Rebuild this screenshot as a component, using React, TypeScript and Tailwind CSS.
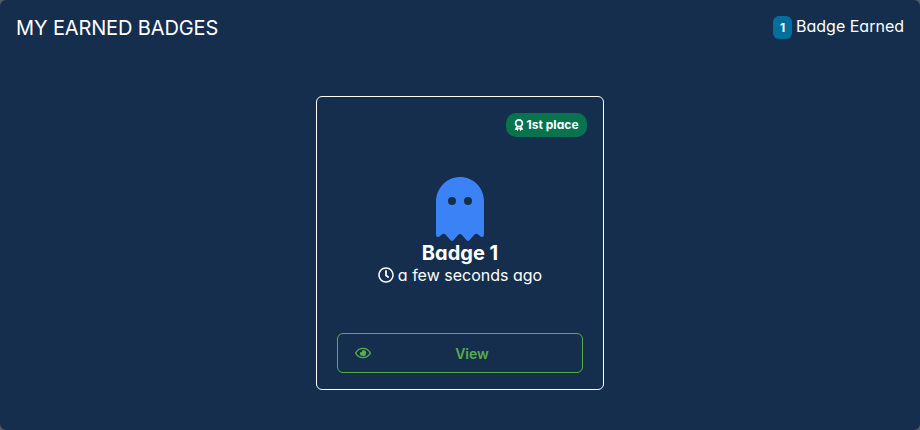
import React from "react";
import { FaRegClock, FaRegEye } from "react-icons/fa";

function RibbonIcon() {
  return (
    <svg className="h-3 w-[10px]" viewBox="0 0 10 12" fill="none" stroke="currentColor">
      <circle cx="5" cy="4.3" r="3.4" strokeWidth="1.8" />
      <path d="M2.6 7.8 1.3 10.5l1.4-.1.8 1.1L4.6 9M7.4 7.8l1.3 2.7-1.4-.1-.8 1.1L5.4 9" fill="currentColor" strokeWidth="0.8" />
    </svg>
  );
}

export default function App() {
  return (
    <div className="flex h-[430px] w-[920px] flex-col bg-[#555c67] font-['Inter',sans-serif] text-white [font-feature-settings:'cv11']">
      <section className="flex flex-1 flex-col rounded-md bg-[#162e4d]">
        <header className="flex h-14 items-center justify-between px-4">
          <h1 className="text-xl font-normal leading-7 tracking-[-0.13px]">MY EARNED BADGES</h1>
          <div className="flex items-center gap-1 pb-0.5">
            <span className="flex h-[23px] w-[19px] items-center justify-center rounded-md bg-[#046f9c] pt-px text-xs font-bold">1</span>
            <span className="-mt-0.5 text-base font-normal">Badge Earned</span>
          </div>
        </header>
        <main className="flex justify-center pt-10">
          <article className="flex h-[294px] w-[288px] flex-col rounded-md border border-white px-5 py-4">
            <div className="-mr-1 flex justify-end">
              <span className="flex h-6 w-[81px] items-center justify-center gap-[2px] rounded-[10px] bg-[#08734f] text-xs font-bold tracking-[0.05px]">
                <RibbonIcon />
                1st place
              </span>
            </div>
            <div className="mt-10 flex flex-col items-center">
              <svg className="h-16 w-12" viewBox="0 0 384 512" fill="#3b82f6">
                <path d="M186.1.1C81 3.2 0 94.9 0 200.1v263.9c0 14.2 17.2 21.4 27.3 11.3l24.9-19c6.7-5.1 16.1-4 21.7 2.2l42.8 48.2c6.2 6.3 16.4 6.3 22.6 0l40.7-45.9c6.4-7.2 17.6-7.2 24 0l40.7 45.9c6.2 6.3 16.4 6.3 22.6 0l42.8-48.2c5.5-6.2 15-7.3 21.6-2.2l24.9 19c10.1 10.1 27.3 2.9 27.3-11.3V192C384 84 294.8-3.2 186.1.1zM128 224a32 32 0 1 1 0-64 32 32 0 0 1 0 64zm128 0a32 32 0 1 1 0-64 32 32 0 0 1 0 64z" />
              </svg>
              <h2 className="text-xl font-bold leading-6">Badge 1</h2>
              <p className="flex items-center gap-1 text-base font-normal leading-5">
                <FaRegClock className="size-4" />
                a few seconds ago
              </p>
            </div>
            <button className="mt-auto flex h-10 w-full items-center rounded-md border border-[#56ad4b] pl-[17px] pr-[9px] text-sm font-semibold text-[#56ad4b]">
              <FaRegEye className="size-4" />
              <span className="flex-1 pt-px text-center">View</span>
            </button>
          </article>
        </main>
      </section>
    </div>
  );
}
